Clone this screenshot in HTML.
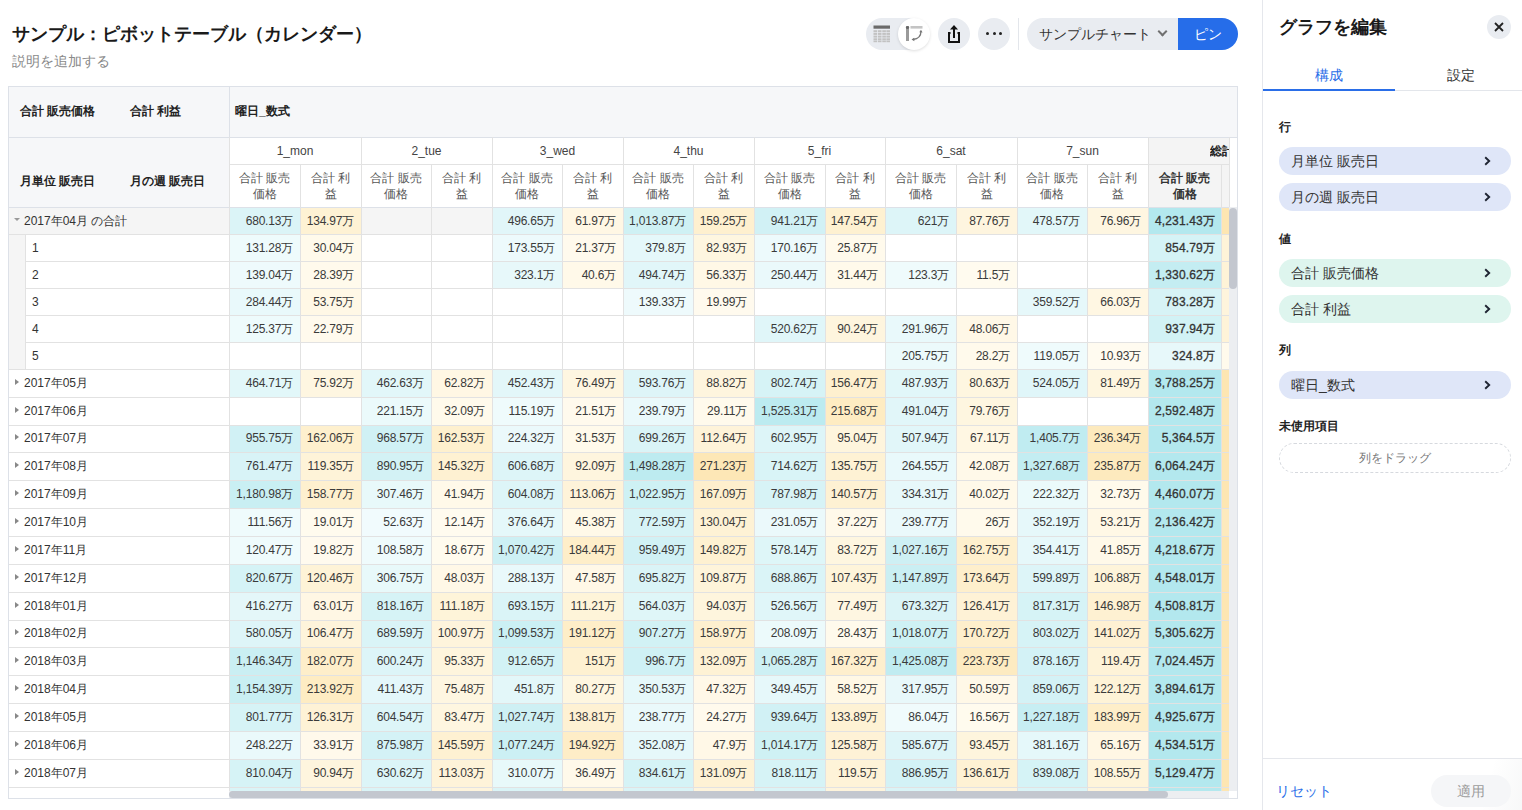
<!DOCTYPE html>
<html><head><meta charset="utf-8">
<style>
*{box-sizing:border-box;margin:0;padding:0}
html,body{width:1522px;height:810px;overflow:hidden;background:#fff;font-family:"Liberation Sans",sans-serif;color:#333}
#w div{position:absolute}
.c{font-size:12px;color:#3a3a3a;white-space:nowrap;letter-spacing:-0.2px}
.tb{font-weight:normal;color:#333;-webkit-text-stroke:0.3px #333;letter-spacing:0.15px}
.rl{font-size:12px;color:#333;white-space:nowrap}
.tri{position:absolute;left:15px;width:0;height:0}
.tri.right{border-top:3px solid transparent;border-bottom:3px solid transparent;border-left:4px solid #888}
.tri.down{border-left:3.5px solid transparent;border-right:3.5px solid transparent;border-top:3.5px solid #999;left:14px}
.hd{font-size:12px;font-weight:bold;color:#222;white-space:nowrap}
.dh{font-size:12px;color:#444;text-align:center;white-space:nowrap}
.mh{font-size:12px;color:#555;text-align:center;line-height:16px}
.pill{border-radius:14px;height:28px;font-size:14px;color:#333;line-height:28px;padding-left:12px}
.pill .chev{position:absolute;left:205px;top:8.6px;width:7px;height:10px;background:none}
.lbl{font-size:12px;font-weight:bold;color:#222}
</style></head><body>
<div id="w" style="position:relative;width:1522px;height:810px">
<!-- title -->
<div style="left:12px;top:22px;font-size:18px;font-weight:bold;color:#1a1a1a;white-space:nowrap;line-height:24px">サンプル：ピボットテーブル（カレンダー）</div>
<div style="left:12px;top:53px;font-size:13.5px;color:#8a8a8a;white-space:nowrap;line-height:18px">説明を追加する</div>
<!-- toolbar -->
<div style="left:866px;top:18px;width:63px;height:32px;border-radius:16px;background:#e9ecf1"></div>
<div style="left:898px;top:18px;width:32px;height:32px;border-radius:16px;background:#fff;box-shadow:0 1px 3px rgba(0,0,0,0.13)"></div>
<svg style="position:absolute;left:873px;top:25px" width="18" height="18" viewBox="0 0 18 18">
<rect x="0.5" y="0.5" width="16.5" height="3.2" fill="#6a6a6a"/>
<g fill="#c2c2c2">
<rect x="0.5" y="5.2" width="3.6" height="2"/><rect x="4.9" y="5.2" width="3.6" height="2"/><rect x="9.3" y="5.2" width="3.6" height="2"/><rect x="13.4" y="5.2" width="3.6" height="2"/>
<rect x="0.5" y="7.9" width="3.6" height="2"/><rect x="4.9" y="7.9" width="3.6" height="2"/><rect x="9.3" y="7.9" width="3.6" height="2"/><rect x="13.4" y="7.9" width="3.6" height="2"/>
<rect x="0.5" y="10.6" width="3.6" height="2"/><rect x="4.9" y="10.6" width="3.6" height="2"/><rect x="9.3" y="10.6" width="3.6" height="2"/><rect x="13.4" y="10.6" width="3.6" height="2"/>
<rect x="0.5" y="13.3" width="3.6" height="2"/><rect x="4.9" y="13.3" width="3.6" height="2"/><rect x="9.3" y="13.3" width="3.6" height="2"/><rect x="13.4" y="13.3" width="3.6" height="2"/>
<rect x="0.5" y="15.6" width="3.6" height="1.6"/><rect x="4.9" y="15.6" width="3.6" height="1.6"/><rect x="9.3" y="15.6" width="3.6" height="1.6"/><rect x="13.4" y="15.6" width="3.6" height="1.6"/>
</g></svg>
<svg style="position:absolute;left:905px;top:25px" width="18" height="18" viewBox="0 0 18 18">
<rect x="1" y="1" width="3" height="15" fill="#9a9a9a"/><circle cx="2.5" cy="2.5" r="1.6" fill="#666"/>
<rect x="5.5" y="1" width="12" height="2.6" fill="#c4c4c4"/>
<path d="M16 6 C16 11 13 14 8 14.5" stroke="#777" stroke-width="1.3" fill="none"/>
<path d="M14.3 7.2 L16 4.8 L17.5 7.4 Z" fill="#777"/><path d="M9.2 12.8 L6.5 14.6 L9.4 16.2 Z" fill="#777"/>
</svg>
<div style="left:938px;top:18px;width:32px;height:32px;border-radius:16px;background:#e9ecf1"></div>
<svg style="position:absolute;left:945px;top:23px" width="18" height="22" viewBox="0 0 18 22">
<path d="M5.5 10 H4 V19 H14 V10 H12.5" stroke="#111" stroke-width="2" fill="none"/>
<path d="M9 15 V3.5" stroke="#111" stroke-width="2"/>
<path d="M5 6.5 L9 2 L13 6.5 Z" fill="#111"/>
</svg>
<div style="left:978px;top:18px;width:32px;height:32px;border-radius:16px;background:#e9ecf1"></div>
<div style="left:986px;top:32px;width:3px;height:3px;border-radius:2px;background:#222"></div>
<div style="left:992.5px;top:32px;width:3px;height:3px;border-radius:2px;background:#222"></div>
<div style="left:999px;top:32px;width:3px;height:3px;border-radius:2px;background:#222"></div>
<div style="left:1018px;top:18px;width:1px;height:32px;background:#e3e6eb"></div>
<div style="left:1027px;top:18px;width:170px;height:32px;border-radius:16px 0 0 16px;background:#e9ecf1"></div>
<div style="left:1039px;top:18px;line-height:32px;font-size:14px;color:#333;white-space:nowrap">サンプルチャート</div>
<div style="left:1158.5px;top:28px;width:7px;height:7px;border-right:2px solid #707070;border-bottom:2px solid #707070;transform:rotate(45deg)"></div>
<div style="left:1178px;top:18px;width:60px;height:32px;border-radius:0 16px 16px 0;background:#266de9"></div>
<div style="left:1178px;top:18px;width:60px;line-height:32px;font-size:14px;color:#fff;text-align:center">ピン</div>

<!-- table frame -->
<div style="left:8px;top:86px;width:1230px;height:713px;border:1px solid #dde1e8;background:#fff"></div>
<div style="left:9px;top:87px;width:1228px;height:50px;background:#f6f7f9"></div>
<div style="left:9px;top:137px;width:220px;height:70px;background:#f6f7f9"></div>
<div style="left:1148px;top:137px;width:81px;height:70px;background:#f4f4f4"></div>
<div style="left:1229px;top:137px;width:8px;height:70px;background:#fff"></div>
<div style="left:9px;top:137px;width:1228px;height:1px;background:#dde1e8"></div>
<div style="left:229px;top:87px;width:1px;height:120px;background:#dde1e8"></div>
<div style="left:9px;top:207px;width:1220px;height:1px;background:#dde1e8"></div>
<div class="hd" style="left:20px;top:103px;line-height:17px">合計 販売価格</div>
<div class="hd" style="left:130px;top:103px;line-height:17px">合計 利益</div>
<div class="hd" style="left:235px;top:103px;line-height:17px">曜日_数式</div>
<div class="hd" style="left:20px;top:173px;line-height:17px">月単位 販売日</div>
<div class="hd" style="left:130px;top:173px;line-height:17px">月の週 販売日</div>
<div class="dh" style="left:229px;top:138px;width:132px;line-height:27px">1_mon</div>
<div class="mh" style="left:229px;top:169.5px;width:71px">合計 販売<br>価格</div>
<div class="mh" style="left:300px;top:169.5px;width:61px">合計 利<br>益</div>
<div style="left:229px;top:137px;width:1px;height:70px;background:#e2e2e2"></div>
<div style="left:300px;top:164px;width:1px;height:43px;background:#e2e2e2"></div>
<div class="dh" style="left:361px;top:138px;width:131px;line-height:27px">2_tue</div>
<div class="mh" style="left:361px;top:169.5px;width:70px">合計 販売<br>価格</div>
<div class="mh" style="left:431px;top:169.5px;width:61px">合計 利<br>益</div>
<div style="left:361px;top:137px;width:1px;height:70px;background:#e2e2e2"></div>
<div style="left:431px;top:164px;width:1px;height:43px;background:#e2e2e2"></div>
<div class="dh" style="left:492px;top:138px;width:131px;line-height:27px">3_wed</div>
<div class="mh" style="left:492px;top:169.5px;width:70px">合計 販売<br>価格</div>
<div class="mh" style="left:562px;top:169.5px;width:61px">合計 利<br>益</div>
<div style="left:492px;top:137px;width:1px;height:70px;background:#e2e2e2"></div>
<div style="left:562px;top:164px;width:1px;height:43px;background:#e2e2e2"></div>
<div class="dh" style="left:623px;top:138px;width:131px;line-height:27px">4_thu</div>
<div class="mh" style="left:623px;top:169.5px;width:70px">合計 販売<br>価格</div>
<div class="mh" style="left:693px;top:169.5px;width:61px">合計 利<br>益</div>
<div style="left:623px;top:137px;width:1px;height:70px;background:#e2e2e2"></div>
<div style="left:693px;top:164px;width:1px;height:43px;background:#e2e2e2"></div>
<div class="dh" style="left:754px;top:138px;width:131px;line-height:27px">5_fri</div>
<div class="mh" style="left:754px;top:169.5px;width:71px">合計 販売<br>価格</div>
<div class="mh" style="left:825px;top:169.5px;width:60px">合計 利<br>益</div>
<div style="left:754px;top:137px;width:1px;height:70px;background:#e2e2e2"></div>
<div style="left:825px;top:164px;width:1px;height:43px;background:#e2e2e2"></div>
<div class="dh" style="left:885px;top:138px;width:132px;line-height:27px">6_sat</div>
<div class="mh" style="left:885px;top:169.5px;width:71px">合計 販売<br>価格</div>
<div class="mh" style="left:956px;top:169.5px;width:61px">合計 利<br>益</div>
<div style="left:885px;top:137px;width:1px;height:70px;background:#e2e2e2"></div>
<div style="left:956px;top:164px;width:1px;height:43px;background:#e2e2e2"></div>
<div class="dh" style="left:1017px;top:138px;width:131px;line-height:27px">7_sun</div>
<div class="mh" style="left:1017px;top:169.5px;width:70px">合計 販売<br>価格</div>
<div class="mh" style="left:1087px;top:169.5px;width:61px">合計 利<br>益</div>
<div style="left:1017px;top:137px;width:1px;height:70px;background:#e2e2e2"></div>
<div style="left:1087px;top:164px;width:1px;height:43px;background:#e2e2e2"></div>
<div style="left:229px;top:164px;width:1000px;height:1px;background:#e2e2e2"></div>
<div style="left:1148px;top:137px;width:1px;height:70px;background:#e2e2e2"></div>
<div style="left:1229px;top:137px;width:1px;height:70px;background:#e2e2e2"></div>
<div class="hd" style="left:1210px;top:138px;width:19px;line-height:27px;overflow:hidden;white-space:nowrap">総計</div>
<div class="mh" style="left:1148px;top:169.5px;width:73px;font-weight:bold;color:#333">合計 販売<br>価格</div>
<div style="left:9px;top:207px;width:220px;height:27px;background:#f5f5f5;"></div>
<div style="left:229px;top:207px;width:71px;height:27px;background:#dbf4f7;"></div>
<div style="left:300px;top:207px;width:61px;height:27px;background:#fef2d4;"></div>
<div class="c" style="left:229px;top:208px;width:71px;height:27px;line-height:27px;text-align:right;padding-right:7px">680.13万</div>
<div class="c" style="left:300px;top:208px;width:61px;height:27px;line-height:27px;text-align:right;padding-right:7px">134.97万</div>
<div style="left:361px;top:207px;width:131px;height:27px;background:#f5f5f5;"></div>
<div style="left:492px;top:207px;width:70px;height:27px;background:#e1f6f9;"></div>
<div style="left:562px;top:207px;width:61px;height:27px;background:#fff7e4;"></div>
<div class="c" style="left:492px;top:208px;width:70px;height:27px;line-height:27px;text-align:right;padding-right:7px">496.65万</div>
<div class="c" style="left:562px;top:208px;width:61px;height:27px;line-height:27px;text-align:right;padding-right:7px">61.97万</div>
<div style="left:623px;top:207px;width:70px;height:27px;background:#cff1f4;"></div>
<div style="left:693px;top:207px;width:61px;height:27px;background:#fef0cf;"></div>
<div class="c" style="left:623px;top:208px;width:70px;height:27px;line-height:27px;text-align:right;padding-right:7px">1,013.87万</div>
<div class="c" style="left:693px;top:208px;width:61px;height:27px;line-height:27px;text-align:right;padding-right:7px">159.25万</div>
<div style="left:754px;top:207px;width:71px;height:27px;background:#d1f1f5;"></div>
<div style="left:825px;top:207px;width:60px;height:27px;background:#fef1d1;"></div>
<div class="c" style="left:754px;top:208px;width:71px;height:27px;line-height:27px;text-align:right;padding-right:7px">941.21万</div>
<div class="c" style="left:825px;top:208px;width:60px;height:27px;line-height:27px;text-align:right;padding-right:7px">147.54万</div>
<div style="left:885px;top:207px;width:71px;height:27px;background:#ddf5f8;"></div>
<div style="left:956px;top:207px;width:61px;height:27px;background:#fef5df;"></div>
<div class="c" style="left:885px;top:208px;width:71px;height:27px;line-height:27px;text-align:right;padding-right:7px">621万</div>
<div class="c" style="left:956px;top:208px;width:61px;height:27px;line-height:27px;text-align:right;padding-right:7px">87.76万</div>
<div style="left:1017px;top:207px;width:70px;height:27px;background:#e2f7f9;"></div>
<div style="left:1087px;top:207px;width:61px;height:27px;background:#fef6e1;"></div>
<div class="c" style="left:1017px;top:208px;width:70px;height:27px;line-height:27px;text-align:right;padding-right:7px">478.57万</div>
<div class="c" style="left:1087px;top:208px;width:61px;height:27px;line-height:27px;text-align:right;padding-right:7px">76.96万</div>
<div style="left:1148px;top:207px;width:73px;height:27px;background:#b3e8ee;"></div>
<div style="left:1221px;top:207px;width:8px;height:27px;background:#fde6b2;"></div>
<div class="c tb" style="left:1148px;top:208px;width:73px;height:27px;line-height:27px;text-align:right;padding-right:6px">4,231.43万</div>
<div class="rl" style="left:24px;top:208px;height:27px;line-height:27px">2017年04月 の合計</div>
<span style="top:218px" class="tri down"></span>
<div style="left:9px;top:234px;width:16px;height:27px;background:#f5f5f5;"></div>
<div style="left:25px;top:234px;width:204px;height:27px;background:#fff;"></div>
<div style="left:229px;top:234px;width:71px;height:27px;background:#eefbfc;"></div>
<div style="left:300px;top:234px;width:61px;height:27px;background:#fffaeb;"></div>
<div class="c" style="left:229px;top:235px;width:71px;height:27px;line-height:27px;text-align:right;padding-right:7px">131.28万</div>
<div class="c" style="left:300px;top:235px;width:61px;height:27px;line-height:27px;text-align:right;padding-right:7px">30.04万</div>
<div style="left:492px;top:234px;width:70px;height:27px;background:#edfafc;"></div>
<div style="left:562px;top:234px;width:61px;height:27px;background:#fffaed;"></div>
<div class="c" style="left:492px;top:235px;width:70px;height:27px;line-height:27px;text-align:right;padding-right:7px">173.55万</div>
<div class="c" style="left:562px;top:235px;width:61px;height:27px;line-height:27px;text-align:right;padding-right:7px">21.37万</div>
<div style="left:623px;top:234px;width:70px;height:27px;background:#e5f8fa;"></div>
<div style="left:693px;top:234px;width:61px;height:27px;background:#fef6e0;"></div>
<div class="c" style="left:623px;top:235px;width:70px;height:27px;line-height:27px;text-align:right;padding-right:7px">379.8万</div>
<div class="c" style="left:693px;top:235px;width:61px;height:27px;line-height:27px;text-align:right;padding-right:7px">82.93万</div>
<div style="left:754px;top:234px;width:71px;height:27px;background:#edfafc;"></div>
<div style="left:825px;top:234px;width:60px;height:27px;background:#fffaec;"></div>
<div class="c" style="left:754px;top:235px;width:71px;height:27px;line-height:27px;text-align:right;padding-right:7px">170.16万</div>
<div class="c" style="left:825px;top:235px;width:60px;height:27px;line-height:27px;text-align:right;padding-right:7px">25.87万</div>
<div style="left:1148px;top:234px;width:73px;height:27px;background:#d5f3f6;"></div>
<div style="left:1221px;top:234px;width:8px;height:27px;background:#fef3d8;"></div>
<div class="c tb" style="left:1148px;top:235px;width:73px;height:27px;line-height:27px;text-align:right;padding-right:6px">854.79万</div>
<div class="rl" style="left:32px;top:235px;height:27px;line-height:27px">1</div>
<div style="left:9px;top:261px;width:16px;height:27px;background:#f5f5f5;"></div>
<div style="left:25px;top:261px;width:204px;height:27px;background:#fff;"></div>
<div style="left:229px;top:261px;width:71px;height:27px;background:#eefafc;"></div>
<div style="left:300px;top:261px;width:61px;height:27px;background:#fffaec;"></div>
<div class="c" style="left:229px;top:262px;width:71px;height:27px;line-height:27px;text-align:right;padding-right:7px">139.04万</div>
<div class="c" style="left:300px;top:262px;width:61px;height:27px;line-height:27px;text-align:right;padding-right:7px">28.39万</div>
<div style="left:492px;top:261px;width:70px;height:27px;background:#e7f8fa;"></div>
<div style="left:562px;top:261px;width:61px;height:27px;background:#fff9e9;"></div>
<div class="c" style="left:492px;top:262px;width:70px;height:27px;line-height:27px;text-align:right;padding-right:7px">323.1万</div>
<div class="c" style="left:562px;top:262px;width:61px;height:27px;line-height:27px;text-align:right;padding-right:7px">40.6万</div>
<div style="left:623px;top:261px;width:70px;height:27px;background:#e1f6f9;"></div>
<div style="left:693px;top:261px;width:61px;height:27px;background:#fff8e6;"></div>
<div class="c" style="left:623px;top:262px;width:70px;height:27px;line-height:27px;text-align:right;padding-right:7px">494.74万</div>
<div class="c" style="left:693px;top:262px;width:61px;height:27px;line-height:27px;text-align:right;padding-right:7px">56.33万</div>
<div style="left:754px;top:261px;width:71px;height:27px;background:#eaf9fb;"></div>
<div style="left:825px;top:261px;width:60px;height:27px;background:#fffaeb;"></div>
<div class="c" style="left:754px;top:262px;width:71px;height:27px;line-height:27px;text-align:right;padding-right:7px">250.44万</div>
<div class="c" style="left:825px;top:262px;width:60px;height:27px;line-height:27px;text-align:right;padding-right:7px">31.44万</div>
<div style="left:885px;top:261px;width:71px;height:27px;background:#effbfc;"></div>
<div style="left:956px;top:261px;width:61px;height:27px;background:#fffbef;"></div>
<div class="c" style="left:885px;top:262px;width:71px;height:27px;line-height:27px;text-align:right;padding-right:7px">123.3万</div>
<div class="c" style="left:956px;top:262px;width:61px;height:27px;line-height:27px;text-align:right;padding-right:7px">11.5万</div>
<div style="left:1148px;top:261px;width:73px;height:27px;background:#c4edf2;"></div>
<div style="left:1221px;top:261px;width:8px;height:27px;background:#fef3d7;"></div>
<div class="c tb" style="left:1148px;top:262px;width:73px;height:27px;line-height:27px;text-align:right;padding-right:6px">1,330.62万</div>
<div class="rl" style="left:32px;top:262px;height:27px;line-height:27px">2</div>
<div style="left:9px;top:288px;width:16px;height:27px;background:#f5f5f5;"></div>
<div style="left:25px;top:288px;width:204px;height:27px;background:#fff;"></div>
<div style="left:229px;top:288px;width:71px;height:27px;background:#e9f9fb;"></div>
<div style="left:300px;top:288px;width:61px;height:27px;background:#fff8e6;"></div>
<div class="c" style="left:229px;top:289px;width:71px;height:27px;line-height:27px;text-align:right;padding-right:7px">284.44万</div>
<div class="c" style="left:300px;top:289px;width:61px;height:27px;line-height:27px;text-align:right;padding-right:7px">53.75万</div>
<div style="left:623px;top:288px;width:70px;height:27px;background:#eefafc;"></div>
<div style="left:693px;top:288px;width:61px;height:27px;background:#fffaee;"></div>
<div class="c" style="left:623px;top:289px;width:70px;height:27px;line-height:27px;text-align:right;padding-right:7px">139.33万</div>
<div class="c" style="left:693px;top:289px;width:61px;height:27px;line-height:27px;text-align:right;padding-right:7px">19.99万</div>
<div style="left:1017px;top:288px;width:70px;height:27px;background:#e6f8fa;"></div>
<div style="left:1087px;top:288px;width:61px;height:27px;background:#fff7e3;"></div>
<div class="c" style="left:1017px;top:289px;width:70px;height:27px;line-height:27px;text-align:right;padding-right:7px">359.52万</div>
<div class="c" style="left:1087px;top:289px;width:61px;height:27px;line-height:27px;text-align:right;padding-right:7px">66.03万</div>
<div style="left:1148px;top:288px;width:73px;height:27px;background:#d7f3f6;"></div>
<div style="left:1221px;top:288px;width:8px;height:27px;background:#fef4dc;"></div>
<div class="c tb" style="left:1148px;top:289px;width:73px;height:27px;line-height:27px;text-align:right;padding-right:6px">783.28万</div>
<div class="rl" style="left:32px;top:289px;height:27px;line-height:27px">3</div>
<div style="left:9px;top:315px;width:16px;height:27px;background:#f5f5f5;"></div>
<div style="left:25px;top:315px;width:204px;height:27px;background:#fff;"></div>
<div style="left:229px;top:315px;width:71px;height:27px;background:#eefbfc;"></div>
<div style="left:300px;top:315px;width:61px;height:27px;background:#fffaed;"></div>
<div class="c" style="left:229px;top:316px;width:71px;height:27px;line-height:27px;text-align:right;padding-right:7px">125.37万</div>
<div class="c" style="left:300px;top:316px;width:61px;height:27px;line-height:27px;text-align:right;padding-right:7px">22.79万</div>
<div style="left:754px;top:315px;width:71px;height:27px;background:#e0f6f9;"></div>
<div style="left:825px;top:315px;width:60px;height:27px;background:#fef5de;"></div>
<div class="c" style="left:754px;top:316px;width:71px;height:27px;line-height:27px;text-align:right;padding-right:7px">520.62万</div>
<div class="c" style="left:825px;top:316px;width:60px;height:27px;line-height:27px;text-align:right;padding-right:7px">90.24万</div>
<div style="left:885px;top:315px;width:71px;height:27px;background:#e9f9fb;"></div>
<div style="left:956px;top:315px;width:61px;height:27px;background:#fff8e7;"></div>
<div class="c" style="left:885px;top:316px;width:71px;height:27px;line-height:27px;text-align:right;padding-right:7px">291.96万</div>
<div class="c" style="left:956px;top:316px;width:61px;height:27px;line-height:27px;text-align:right;padding-right:7px">48.06万</div>
<div style="left:1148px;top:315px;width:73px;height:27px;background:#d2f2f5;"></div>
<div style="left:1221px;top:315px;width:8px;height:27px;background:#fef3d8;"></div>
<div class="c tb" style="left:1148px;top:316px;width:73px;height:27px;line-height:27px;text-align:right;padding-right:6px">937.94万</div>
<div class="rl" style="left:32px;top:316px;height:27px;line-height:27px">4</div>
<div style="left:9px;top:342px;width:16px;height:27px;background:#f5f5f5;"></div>
<div style="left:25px;top:342px;width:204px;height:27px;background:#fff;"></div>
<div style="left:885px;top:342px;width:71px;height:27px;background:#ecfafb;"></div>
<div style="left:956px;top:342px;width:61px;height:27px;background:#fffaec;"></div>
<div class="c" style="left:885px;top:343px;width:71px;height:27px;line-height:27px;text-align:right;padding-right:7px">205.75万</div>
<div class="c" style="left:956px;top:343px;width:61px;height:27px;line-height:27px;text-align:right;padding-right:7px">28.2万</div>
<div style="left:1017px;top:342px;width:70px;height:27px;background:#effbfc;"></div>
<div style="left:1087px;top:342px;width:61px;height:27px;background:#fffbf0;"></div>
<div class="c" style="left:1017px;top:343px;width:70px;height:27px;line-height:27px;text-align:right;padding-right:7px">119.05万</div>
<div class="c" style="left:1087px;top:343px;width:61px;height:27px;line-height:27px;text-align:right;padding-right:7px">10.93万</div>
<div style="left:1148px;top:342px;width:73px;height:27px;background:#e7f8fa;"></div>
<div style="left:1221px;top:342px;width:8px;height:27px;background:#fffaec;"></div>
<div class="c tb" style="left:1148px;top:343px;width:73px;height:27px;line-height:27px;text-align:right;padding-right:6px">324.8万</div>
<div class="rl" style="left:32px;top:343px;height:27px;line-height:27px">5</div>
<div style="left:229px;top:369px;width:71px;height:28px;background:#e2f7f9;"></div>
<div style="left:300px;top:369px;width:61px;height:28px;background:#fef6e1;"></div>
<div class="c" style="left:229px;top:369px;width:71px;height:28px;line-height:28px;text-align:right;padding-right:7px">464.71万</div>
<div class="c" style="left:300px;top:369px;width:61px;height:28px;line-height:28px;text-align:right;padding-right:7px">75.92万</div>
<div style="left:361px;top:369px;width:70px;height:28px;background:#e2f7f9;"></div>
<div style="left:431px;top:369px;width:61px;height:28px;background:#fff7e4;"></div>
<div class="c" style="left:361px;top:369px;width:70px;height:28px;line-height:28px;text-align:right;padding-right:7px">462.63万</div>
<div class="c" style="left:431px;top:369px;width:61px;height:28px;line-height:28px;text-align:right;padding-right:7px">62.82万</div>
<div style="left:492px;top:369px;width:70px;height:28px;background:#e3f7f9;"></div>
<div style="left:562px;top:369px;width:61px;height:28px;background:#fef6e1;"></div>
<div class="c" style="left:492px;top:369px;width:70px;height:28px;line-height:28px;text-align:right;padding-right:7px">452.43万</div>
<div class="c" style="left:562px;top:369px;width:61px;height:28px;line-height:28px;text-align:right;padding-right:7px">76.49万</div>
<div style="left:623px;top:369px;width:70px;height:28px;background:#def5f8;"></div>
<div style="left:693px;top:369px;width:61px;height:28px;background:#fef5de;"></div>
<div class="c" style="left:623px;top:369px;width:70px;height:28px;line-height:28px;text-align:right;padding-right:7px">593.76万</div>
<div class="c" style="left:693px;top:369px;width:61px;height:28px;line-height:28px;text-align:right;padding-right:7px">88.82万</div>
<div style="left:754px;top:369px;width:71px;height:28px;background:#d6f3f6;"></div>
<div style="left:825px;top:369px;width:60px;height:28px;background:#fef0cf;"></div>
<div class="c" style="left:754px;top:369px;width:71px;height:28px;line-height:28px;text-align:right;padding-right:7px">802.74万</div>
<div class="c" style="left:825px;top:369px;width:60px;height:28px;line-height:28px;text-align:right;padding-right:7px">156.47万</div>
<div style="left:885px;top:369px;width:71px;height:28px;background:#e1f7f9;"></div>
<div style="left:956px;top:369px;width:61px;height:28px;background:#fef6e0;"></div>
<div class="c" style="left:885px;top:369px;width:71px;height:28px;line-height:28px;text-align:right;padding-right:7px">487.93万</div>
<div class="c" style="left:956px;top:369px;width:61px;height:28px;line-height:28px;text-align:right;padding-right:7px">80.63万</div>
<div style="left:1017px;top:369px;width:70px;height:28px;background:#e0f6f9;"></div>
<div style="left:1087px;top:369px;width:61px;height:28px;background:#fef6e0;"></div>
<div class="c" style="left:1017px;top:369px;width:70px;height:28px;line-height:28px;text-align:right;padding-right:7px">524.05万</div>
<div class="c" style="left:1087px;top:369px;width:61px;height:28px;line-height:28px;text-align:right;padding-right:7px">81.49万</div>
<div style="left:1148px;top:369px;width:73px;height:28px;background:#b3e8ee;"></div>
<div style="left:1221px;top:369px;width:8px;height:28px;background:#fde6b2;"></div>
<div class="c tb" style="left:1148px;top:369px;width:73px;height:28px;line-height:28px;text-align:right;padding-right:6px">3,788.25万</div>
<div class="rl" style="left:24px;top:369px;height:28px;line-height:28px">2017年05月</div>
<span style="top:379px" class="tri right"></span>
<div style="left:361px;top:397px;width:70px;height:28px;background:#ebfafb;"></div>
<div style="left:431px;top:397px;width:61px;height:28px;background:#fffaeb;"></div>
<div class="c" style="left:361px;top:397px;width:70px;height:28px;line-height:28px;text-align:right;padding-right:7px">221.15万</div>
<div class="c" style="left:431px;top:397px;width:61px;height:28px;line-height:28px;text-align:right;padding-right:7px">32.09万</div>
<div style="left:492px;top:397px;width:70px;height:28px;background:#effbfc;"></div>
<div style="left:562px;top:397px;width:61px;height:28px;background:#fffaed;"></div>
<div class="c" style="left:492px;top:397px;width:70px;height:28px;line-height:28px;text-align:right;padding-right:7px">115.19万</div>
<div class="c" style="left:562px;top:397px;width:61px;height:28px;line-height:28px;text-align:right;padding-right:7px">21.51万</div>
<div style="left:623px;top:397px;width:70px;height:28px;background:#eaf9fb;"></div>
<div style="left:693px;top:397px;width:61px;height:28px;background:#fffaec;"></div>
<div class="c" style="left:623px;top:397px;width:70px;height:28px;line-height:28px;text-align:right;padding-right:7px">239.79万</div>
<div class="c" style="left:693px;top:397px;width:61px;height:28px;line-height:28px;text-align:right;padding-right:7px">29.11万</div>
<div style="left:754px;top:397px;width:71px;height:28px;background:#bcebf0;"></div>
<div style="left:825px;top:397px;width:60px;height:28px;background:#feecc2;"></div>
<div class="c" style="left:754px;top:397px;width:71px;height:28px;line-height:28px;text-align:right;padding-right:7px">1,525.31万</div>
<div class="c" style="left:825px;top:397px;width:60px;height:28px;line-height:28px;text-align:right;padding-right:7px">215.68万</div>
<div style="left:885px;top:397px;width:71px;height:28px;background:#e1f6f9;"></div>
<div style="left:956px;top:397px;width:61px;height:28px;background:#fef6e0;"></div>
<div class="c" style="left:885px;top:397px;width:71px;height:28px;line-height:28px;text-align:right;padding-right:7px">491.04万</div>
<div class="c" style="left:956px;top:397px;width:61px;height:28px;line-height:28px;text-align:right;padding-right:7px">79.76万</div>
<div style="left:1148px;top:397px;width:73px;height:28px;background:#b3e8ee;"></div>
<div style="left:1221px;top:397px;width:8px;height:28px;background:#fde7b5;"></div>
<div class="c tb" style="left:1148px;top:397px;width:73px;height:28px;line-height:28px;text-align:right;padding-right:6px">2,592.48万</div>
<div class="rl" style="left:24px;top:397px;height:28px;line-height:28px">2017年06月</div>
<span style="top:407px" class="tri right"></span>
<div style="left:229px;top:425px;width:71px;height:27px;background:#d1f1f5;"></div>
<div style="left:300px;top:425px;width:61px;height:27px;background:#fef0ce;"></div>
<div class="c" style="left:229px;top:425px;width:71px;height:27px;line-height:27px;text-align:right;padding-right:7px">955.75万</div>
<div class="c" style="left:300px;top:425px;width:61px;height:27px;line-height:27px;text-align:right;padding-right:7px">162.06万</div>
<div style="left:361px;top:425px;width:70px;height:27px;background:#d0f1f5;"></div>
<div style="left:431px;top:425px;width:61px;height:27px;background:#fef0ce;"></div>
<div class="c" style="left:361px;top:425px;width:70px;height:27px;line-height:27px;text-align:right;padding-right:7px">968.57万</div>
<div class="c" style="left:431px;top:425px;width:61px;height:27px;line-height:27px;text-align:right;padding-right:7px">162.53万</div>
<div style="left:492px;top:425px;width:70px;height:27px;background:#ebf9fb;"></div>
<div style="left:562px;top:425px;width:61px;height:27px;background:#fffaeb;"></div>
<div class="c" style="left:492px;top:425px;width:70px;height:27px;line-height:27px;text-align:right;padding-right:7px">224.32万</div>
<div class="c" style="left:562px;top:425px;width:61px;height:27px;line-height:27px;text-align:right;padding-right:7px">31.53万</div>
<div style="left:623px;top:425px;width:70px;height:27px;background:#daf4f7;"></div>
<div style="left:693px;top:425px;width:61px;height:27px;background:#fef3d9;"></div>
<div class="c" style="left:623px;top:425px;width:70px;height:27px;line-height:27px;text-align:right;padding-right:7px">699.26万</div>
<div class="c" style="left:693px;top:425px;width:61px;height:27px;line-height:27px;text-align:right;padding-right:7px">112.64万</div>
<div style="left:754px;top:425px;width:71px;height:27px;background:#ddf5f8;"></div>
<div style="left:825px;top:425px;width:60px;height:27px;background:#fef5dd;"></div>
<div class="c" style="left:754px;top:425px;width:71px;height:27px;line-height:27px;text-align:right;padding-right:7px">602.95万</div>
<div class="c" style="left:825px;top:425px;width:60px;height:27px;line-height:27px;text-align:right;padding-right:7px">95.04万</div>
<div style="left:885px;top:425px;width:71px;height:27px;background:#e1f6f9;"></div>
<div style="left:956px;top:425px;width:61px;height:27px;background:#fff7e3;"></div>
<div class="c" style="left:885px;top:425px;width:71px;height:27px;line-height:27px;text-align:right;padding-right:7px">507.94万</div>
<div class="c" style="left:956px;top:425px;width:61px;height:27px;line-height:27px;text-align:right;padding-right:7px">67.11万</div>
<div style="left:1017px;top:425px;width:70px;height:27px;background:#c0ecf1;"></div>
<div style="left:1087px;top:425px;width:61px;height:27px;background:#fdeabe;"></div>
<div class="c" style="left:1017px;top:425px;width:70px;height:27px;line-height:27px;text-align:right;padding-right:7px">1,405.7万</div>
<div class="c" style="left:1087px;top:425px;width:61px;height:27px;line-height:27px;text-align:right;padding-right:7px">236.34万</div>
<div style="left:1148px;top:425px;width:73px;height:27px;background:#b3e8ee;"></div>
<div style="left:1221px;top:425px;width:8px;height:27px;background:#fde6b2;"></div>
<div class="c tb" style="left:1148px;top:425px;width:73px;height:27px;line-height:27px;text-align:right;padding-right:6px">5,364.5万</div>
<div class="rl" style="left:24px;top:425px;height:27px;line-height:27px">2017年07月</div>
<span style="top:434px" class="tri right"></span>
<div style="left:229px;top:452px;width:71px;height:28px;background:#d8f3f7;"></div>
<div style="left:300px;top:452px;width:61px;height:28px;background:#fef3d8;"></div>
<div class="c" style="left:229px;top:452px;width:71px;height:28px;line-height:28px;text-align:right;padding-right:7px">761.47万</div>
<div class="c" style="left:300px;top:452px;width:61px;height:28px;line-height:28px;text-align:right;padding-right:7px">119.35万</div>
<div style="left:361px;top:452px;width:70px;height:28px;background:#d3f2f5;"></div>
<div style="left:431px;top:452px;width:61px;height:28px;background:#fef1d2;"></div>
<div class="c" style="left:361px;top:452px;width:70px;height:28px;line-height:28px;text-align:right;padding-right:7px">890.95万</div>
<div class="c" style="left:431px;top:452px;width:61px;height:28px;line-height:28px;text-align:right;padding-right:7px">145.32万</div>
<div style="left:492px;top:452px;width:70px;height:28px;background:#ddf5f8;"></div>
<div style="left:562px;top:452px;width:61px;height:28px;background:#fef5de;"></div>
<div class="c" style="left:492px;top:452px;width:70px;height:28px;line-height:28px;text-align:right;padding-right:7px">606.68万</div>
<div class="c" style="left:562px;top:452px;width:61px;height:28px;line-height:28px;text-align:right;padding-right:7px">92.09万</div>
<div style="left:623px;top:452px;width:70px;height:28px;background:#bdebf0;"></div>
<div style="left:693px;top:452px;width:61px;height:28px;background:#fde7b6;"></div>
<div class="c" style="left:623px;top:452px;width:70px;height:28px;line-height:28px;text-align:right;padding-right:7px">1,498.28万</div>
<div class="c" style="left:693px;top:452px;width:61px;height:28px;line-height:28px;text-align:right;padding-right:7px">271.23万</div>
<div style="left:754px;top:452px;width:71px;height:28px;background:#d9f4f7;"></div>
<div style="left:825px;top:452px;width:60px;height:28px;background:#fef2d4;"></div>
<div class="c" style="left:754px;top:452px;width:71px;height:28px;line-height:28px;text-align:right;padding-right:7px">714.62万</div>
<div class="c" style="left:825px;top:452px;width:60px;height:28px;line-height:28px;text-align:right;padding-right:7px">135.75万</div>
<div style="left:885px;top:452px;width:71px;height:28px;background:#e9f9fb;"></div>
<div style="left:956px;top:452px;width:61px;height:28px;background:#fff9e9;"></div>
<div class="c" style="left:885px;top:452px;width:71px;height:28px;line-height:28px;text-align:right;padding-right:7px">264.55万</div>
<div class="c" style="left:956px;top:452px;width:61px;height:28px;line-height:28px;text-align:right;padding-right:7px">42.08万</div>
<div style="left:1017px;top:452px;width:70px;height:28px;background:#c3edf2;"></div>
<div style="left:1087px;top:452px;width:61px;height:28px;background:#fdeabe;"></div>
<div class="c" style="left:1017px;top:452px;width:70px;height:28px;line-height:28px;text-align:right;padding-right:7px">1,327.68万</div>
<div class="c" style="left:1087px;top:452px;width:61px;height:28px;line-height:28px;text-align:right;padding-right:7px">235.87万</div>
<div style="left:1148px;top:452px;width:73px;height:28px;background:#b3e8ee;"></div>
<div style="left:1221px;top:452px;width:8px;height:28px;background:#fde6b2;"></div>
<div class="c tb" style="left:1148px;top:452px;width:73px;height:28px;line-height:28px;text-align:right;padding-right:6px">6,064.24万</div>
<div class="rl" style="left:24px;top:452px;height:28px;line-height:28px">2017年08月</div>
<span style="top:462px" class="tri right"></span>
<div style="left:229px;top:480px;width:71px;height:28px;background:#c9eff3;"></div>
<div style="left:300px;top:480px;width:61px;height:28px;background:#fef0cf;"></div>
<div class="c" style="left:229px;top:480px;width:71px;height:28px;line-height:28px;text-align:right;padding-right:7px">1,180.98万</div>
<div class="c" style="left:300px;top:480px;width:61px;height:28px;line-height:28px;text-align:right;padding-right:7px">158.77万</div>
<div style="left:361px;top:480px;width:70px;height:28px;background:#e8f9fa;"></div>
<div style="left:431px;top:480px;width:61px;height:28px;background:#fff9e9;"></div>
<div class="c" style="left:361px;top:480px;width:70px;height:28px;line-height:28px;text-align:right;padding-right:7px">307.46万</div>
<div class="c" style="left:431px;top:480px;width:61px;height:28px;line-height:28px;text-align:right;padding-right:7px">41.94万</div>
<div style="left:492px;top:480px;width:70px;height:28px;background:#ddf5f8;"></div>
<div style="left:562px;top:480px;width:61px;height:28px;background:#fef3d9;"></div>
<div class="c" style="left:492px;top:480px;width:70px;height:28px;line-height:28px;text-align:right;padding-right:7px">604.08万</div>
<div class="c" style="left:562px;top:480px;width:61px;height:28px;line-height:28px;text-align:right;padding-right:7px">113.06万</div>
<div style="left:623px;top:480px;width:70px;height:28px;background:#cef1f4;"></div>
<div style="left:693px;top:480px;width:61px;height:28px;background:#feefcd;"></div>
<div class="c" style="left:623px;top:480px;width:70px;height:28px;line-height:28px;text-align:right;padding-right:7px">1,022.95万</div>
<div class="c" style="left:693px;top:480px;width:61px;height:28px;line-height:28px;text-align:right;padding-right:7px">167.09万</div>
<div style="left:754px;top:480px;width:71px;height:28px;background:#d7f3f6;"></div>
<div style="left:825px;top:480px;width:60px;height:28px;background:#fef1d3;"></div>
<div class="c" style="left:754px;top:480px;width:71px;height:28px;line-height:28px;text-align:right;padding-right:7px">787.98万</div>
<div class="c" style="left:825px;top:480px;width:60px;height:28px;line-height:28px;text-align:right;padding-right:7px">140.57万</div>
<div style="left:885px;top:480px;width:71px;height:28px;background:#e7f8fa;"></div>
<div style="left:956px;top:480px;width:61px;height:28px;background:#fff9e9;"></div>
<div class="c" style="left:885px;top:480px;width:71px;height:28px;line-height:28px;text-align:right;padding-right:7px">334.31万</div>
<div class="c" style="left:956px;top:480px;width:61px;height:28px;line-height:28px;text-align:right;padding-right:7px">40.02万</div>
<div style="left:1017px;top:480px;width:70px;height:28px;background:#ebfafb;"></div>
<div style="left:1087px;top:480px;width:61px;height:28px;background:#fffaeb;"></div>
<div class="c" style="left:1017px;top:480px;width:70px;height:28px;line-height:28px;text-align:right;padding-right:7px">222.32万</div>
<div class="c" style="left:1087px;top:480px;width:61px;height:28px;line-height:28px;text-align:right;padding-right:7px">32.73万</div>
<div style="left:1148px;top:480px;width:73px;height:28px;background:#b3e8ee;"></div>
<div style="left:1221px;top:480px;width:8px;height:28px;background:#fde6b2;"></div>
<div class="c tb" style="left:1148px;top:480px;width:73px;height:28px;line-height:28px;text-align:right;padding-right:6px">4,460.07万</div>
<div class="rl" style="left:24px;top:480px;height:28px;line-height:28px">2017年09月</div>
<span style="top:490px" class="tri right"></span>
<div style="left:229px;top:508px;width:71px;height:28px;background:#effbfc;"></div>
<div style="left:300px;top:508px;width:61px;height:28px;background:#fffbee;"></div>
<div class="c" style="left:229px;top:508px;width:71px;height:28px;line-height:28px;text-align:right;padding-right:7px">111.56万</div>
<div class="c" style="left:300px;top:508px;width:61px;height:28px;line-height:28px;text-align:right;padding-right:7px">19.01万</div>
<div style="left:361px;top:508px;width:70px;height:28px;background:#f1fbfd;"></div>
<div style="left:431px;top:508px;width:61px;height:28px;background:#fffbef;"></div>
<div class="c" style="left:361px;top:508px;width:70px;height:28px;line-height:28px;text-align:right;padding-right:7px">52.63万</div>
<div class="c" style="left:431px;top:508px;width:61px;height:28px;line-height:28px;text-align:right;padding-right:7px">12.14万</div>
<div style="left:492px;top:508px;width:70px;height:28px;background:#e5f8fa;"></div>
<div style="left:562px;top:508px;width:61px;height:28px;background:#fff9e8;"></div>
<div class="c" style="left:492px;top:508px;width:70px;height:28px;line-height:28px;text-align:right;padding-right:7px">376.64万</div>
<div class="c" style="left:562px;top:508px;width:61px;height:28px;line-height:28px;text-align:right;padding-right:7px">45.38万</div>
<div style="left:623px;top:508px;width:70px;height:28px;background:#d7f3f6;"></div>
<div style="left:693px;top:508px;width:61px;height:28px;background:#fef2d5;"></div>
<div class="c" style="left:623px;top:508px;width:70px;height:28px;line-height:28px;text-align:right;padding-right:7px">772.59万</div>
<div class="c" style="left:693px;top:508px;width:61px;height:28px;line-height:28px;text-align:right;padding-right:7px">130.04万</div>
<div style="left:754px;top:508px;width:71px;height:28px;background:#ebf9fb;"></div>
<div style="left:825px;top:508px;width:60px;height:28px;background:#fff9ea;"></div>
<div class="c" style="left:754px;top:508px;width:71px;height:28px;line-height:28px;text-align:right;padding-right:7px">231.05万</div>
<div class="c" style="left:825px;top:508px;width:60px;height:28px;line-height:28px;text-align:right;padding-right:7px">37.22万</div>
<div style="left:885px;top:508px;width:71px;height:28px;background:#eaf9fb;"></div>
<div style="left:956px;top:508px;width:61px;height:28px;background:#fffaec;"></div>
<div class="c" style="left:885px;top:508px;width:71px;height:28px;line-height:28px;text-align:right;padding-right:7px">239.77万</div>
<div class="c" style="left:956px;top:508px;width:61px;height:28px;line-height:28px;text-align:right;padding-right:7px">26万</div>
<div style="left:1017px;top:508px;width:70px;height:28px;background:#e6f8fa;"></div>
<div style="left:1087px;top:508px;width:61px;height:28px;background:#fff8e6;"></div>
<div class="c" style="left:1017px;top:508px;width:70px;height:28px;line-height:28px;text-align:right;padding-right:7px">352.19万</div>
<div class="c" style="left:1087px;top:508px;width:61px;height:28px;line-height:28px;text-align:right;padding-right:7px">53.21万</div>
<div style="left:1148px;top:508px;width:73px;height:28px;background:#b3e8ee;"></div>
<div style="left:1221px;top:508px;width:8px;height:28px;background:#fdeabe;"></div>
<div class="c tb" style="left:1148px;top:508px;width:73px;height:28px;line-height:28px;text-align:right;padding-right:6px">2,136.42万</div>
<div class="rl" style="left:24px;top:508px;height:28px;line-height:28px">2017年10月</div>
<span style="top:518px" class="tri right"></span>
<div style="left:229px;top:536px;width:71px;height:28px;background:#effbfc;"></div>
<div style="left:300px;top:536px;width:61px;height:28px;background:#fffaee;"></div>
<div class="c" style="left:229px;top:536px;width:71px;height:28px;line-height:28px;text-align:right;padding-right:7px">120.47万</div>
<div class="c" style="left:300px;top:536px;width:61px;height:28px;line-height:28px;text-align:right;padding-right:7px">19.82万</div>
<div style="left:361px;top:536px;width:70px;height:28px;background:#effbfc;"></div>
<div style="left:431px;top:536px;width:61px;height:28px;background:#fffbee;"></div>
<div class="c" style="left:361px;top:536px;width:70px;height:28px;line-height:28px;text-align:right;padding-right:7px">108.58万</div>
<div class="c" style="left:431px;top:536px;width:61px;height:28px;line-height:28px;text-align:right;padding-right:7px">18.67万</div>
<div style="left:492px;top:536px;width:70px;height:28px;background:#cdf0f4;"></div>
<div style="left:562px;top:536px;width:61px;height:28px;background:#feeec9;"></div>
<div class="c" style="left:492px;top:536px;width:70px;height:28px;line-height:28px;text-align:right;padding-right:7px">1,070.42万</div>
<div class="c" style="left:562px;top:536px;width:61px;height:28px;line-height:28px;text-align:right;padding-right:7px">184.44万</div>
<div style="left:623px;top:536px;width:70px;height:28px;background:#d1f1f5;"></div>
<div style="left:693px;top:536px;width:61px;height:28px;background:#fef1d1;"></div>
<div class="c" style="left:623px;top:536px;width:70px;height:28px;line-height:28px;text-align:right;padding-right:7px">959.49万</div>
<div class="c" style="left:693px;top:536px;width:61px;height:28px;line-height:28px;text-align:right;padding-right:7px">149.82万</div>
<div style="left:754px;top:536px;width:71px;height:28px;background:#def6f8;"></div>
<div style="left:825px;top:536px;width:60px;height:28px;background:#fef6e0;"></div>
<div class="c" style="left:754px;top:536px;width:71px;height:28px;line-height:28px;text-align:right;padding-right:7px">578.14万</div>
<div class="c" style="left:825px;top:536px;width:60px;height:28px;line-height:28px;text-align:right;padding-right:7px">83.72万</div>
<div style="left:885px;top:536px;width:71px;height:28px;background:#cef0f4;"></div>
<div style="left:956px;top:536px;width:61px;height:28px;background:#fef0ce;"></div>
<div class="c" style="left:885px;top:536px;width:71px;height:28px;line-height:28px;text-align:right;padding-right:7px">1,027.16万</div>
<div class="c" style="left:956px;top:536px;width:61px;height:28px;line-height:28px;text-align:right;padding-right:7px">162.75万</div>
<div style="left:1017px;top:536px;width:70px;height:28px;background:#e6f8fa;"></div>
<div style="left:1087px;top:536px;width:61px;height:28px;background:#fff9e9;"></div>
<div class="c" style="left:1017px;top:536px;width:70px;height:28px;line-height:28px;text-align:right;padding-right:7px">354.41万</div>
<div class="c" style="left:1087px;top:536px;width:61px;height:28px;line-height:28px;text-align:right;padding-right:7px">41.85万</div>
<div style="left:1148px;top:536px;width:73px;height:28px;background:#b3e8ee;"></div>
<div style="left:1221px;top:536px;width:8px;height:28px;background:#fde6b2;"></div>
<div class="c tb" style="left:1148px;top:536px;width:73px;height:28px;line-height:28px;text-align:right;padding-right:6px">4,218.67万</div>
<div class="rl" style="left:24px;top:536px;height:28px;line-height:28px">2017年11月</div>
<span style="top:546px" class="tri right"></span>
<div style="left:229px;top:564px;width:71px;height:28px;background:#d5f3f6;"></div>
<div style="left:300px;top:564px;width:61px;height:28px;background:#fef3d7;"></div>
<div class="c" style="left:229px;top:564px;width:71px;height:28px;line-height:28px;text-align:right;padding-right:7px">820.67万</div>
<div class="c" style="left:300px;top:564px;width:61px;height:28px;line-height:28px;text-align:right;padding-right:7px">120.46万</div>
<div style="left:361px;top:564px;width:70px;height:28px;background:#e8f9fa;"></div>
<div style="left:431px;top:564px;width:61px;height:28px;background:#fff8e7;"></div>
<div class="c" style="left:361px;top:564px;width:70px;height:28px;line-height:28px;text-align:right;padding-right:7px">306.75万</div>
<div class="c" style="left:431px;top:564px;width:61px;height:28px;line-height:28px;text-align:right;padding-right:7px">48.03万</div>
<div style="left:492px;top:564px;width:70px;height:28px;background:#e9f9fb;"></div>
<div style="left:562px;top:564px;width:61px;height:28px;background:#fff8e7;"></div>
<div class="c" style="left:492px;top:564px;width:70px;height:28px;line-height:28px;text-align:right;padding-right:7px">288.13万</div>
<div class="c" style="left:562px;top:564px;width:61px;height:28px;line-height:28px;text-align:right;padding-right:7px">47.58万</div>
<div style="left:623px;top:564px;width:70px;height:28px;background:#daf4f7;"></div>
<div style="left:693px;top:564px;width:61px;height:28px;background:#fef4da;"></div>
<div class="c" style="left:623px;top:564px;width:70px;height:28px;line-height:28px;text-align:right;padding-right:7px">695.82万</div>
<div class="c" style="left:693px;top:564px;width:61px;height:28px;line-height:28px;text-align:right;padding-right:7px">109.87万</div>
<div style="left:754px;top:564px;width:71px;height:28px;background:#daf4f7;"></div>
<div style="left:825px;top:564px;width:60px;height:28px;background:#fef4da;"></div>
<div class="c" style="left:754px;top:564px;width:71px;height:28px;line-height:28px;text-align:right;padding-right:7px">688.86万</div>
<div class="c" style="left:825px;top:564px;width:60px;height:28px;line-height:28px;text-align:right;padding-right:7px">107.43万</div>
<div style="left:885px;top:564px;width:71px;height:28px;background:#caeff3;"></div>
<div style="left:956px;top:564px;width:61px;height:28px;background:#feefcc;"></div>
<div class="c" style="left:885px;top:564px;width:71px;height:28px;line-height:28px;text-align:right;padding-right:7px">1,147.89万</div>
<div class="c" style="left:956px;top:564px;width:61px;height:28px;line-height:28px;text-align:right;padding-right:7px">173.64万</div>
<div style="left:1017px;top:564px;width:70px;height:28px;background:#ddf5f8;"></div>
<div style="left:1087px;top:564px;width:61px;height:28px;background:#fef4da;"></div>
<div class="c" style="left:1017px;top:564px;width:70px;height:28px;line-height:28px;text-align:right;padding-right:7px">599.89万</div>
<div class="c" style="left:1087px;top:564px;width:61px;height:28px;line-height:28px;text-align:right;padding-right:7px">106.88万</div>
<div style="left:1148px;top:564px;width:73px;height:28px;background:#b3e8ee;"></div>
<div style="left:1221px;top:564px;width:8px;height:28px;background:#fde6b2;"></div>
<div class="c tb" style="left:1148px;top:564px;width:73px;height:28px;line-height:28px;text-align:right;padding-right:6px">4,548.01万</div>
<div class="rl" style="left:24px;top:564px;height:28px;line-height:28px">2017年12月</div>
<span style="top:574px" class="tri right"></span>
<div style="left:229px;top:592px;width:71px;height:28px;background:#e4f7f9;"></div>
<div style="left:300px;top:592px;width:61px;height:28px;background:#fff7e4;"></div>
<div class="c" style="left:229px;top:592px;width:71px;height:28px;line-height:28px;text-align:right;padding-right:7px">416.27万</div>
<div class="c" style="left:300px;top:592px;width:61px;height:28px;line-height:28px;text-align:right;padding-right:7px">63.01万</div>
<div style="left:361px;top:592px;width:70px;height:28px;background:#d6f3f6;"></div>
<div style="left:431px;top:592px;width:61px;height:28px;background:#fef4d9;"></div>
<div class="c" style="left:361px;top:592px;width:70px;height:28px;line-height:28px;text-align:right;padding-right:7px">818.16万</div>
<div class="c" style="left:431px;top:592px;width:61px;height:28px;line-height:28px;text-align:right;padding-right:7px">111.18万</div>
<div style="left:492px;top:592px;width:70px;height:28px;background:#daf4f7;"></div>
<div style="left:562px;top:592px;width:61px;height:28px;background:#fef4d9;"></div>
<div class="c" style="left:492px;top:592px;width:70px;height:28px;line-height:28px;text-align:right;padding-right:7px">693.15万</div>
<div class="c" style="left:562px;top:592px;width:61px;height:28px;line-height:28px;text-align:right;padding-right:7px">111.21万</div>
<div style="left:623px;top:592px;width:70px;height:28px;background:#dff6f8;"></div>
<div style="left:693px;top:592px;width:61px;height:28px;background:#fef5dd;"></div>
<div class="c" style="left:623px;top:592px;width:70px;height:28px;line-height:28px;text-align:right;padding-right:7px">564.03万</div>
<div class="c" style="left:693px;top:592px;width:61px;height:28px;line-height:28px;text-align:right;padding-right:7px">94.03万</div>
<div style="left:754px;top:592px;width:71px;height:28px;background:#e0f6f9;"></div>
<div style="left:825px;top:592px;width:60px;height:28px;background:#fef6e1;"></div>
<div class="c" style="left:754px;top:592px;width:71px;height:28px;line-height:28px;text-align:right;padding-right:7px">526.56万</div>
<div class="c" style="left:825px;top:592px;width:60px;height:28px;line-height:28px;text-align:right;padding-right:7px">77.49万</div>
<div style="left:885px;top:592px;width:71px;height:28px;background:#dbf4f7;"></div>
<div style="left:956px;top:592px;width:61px;height:28px;background:#fef2d6;"></div>
<div class="c" style="left:885px;top:592px;width:71px;height:28px;line-height:28px;text-align:right;padding-right:7px">673.32万</div>
<div class="c" style="left:956px;top:592px;width:61px;height:28px;line-height:28px;text-align:right;padding-right:7px">126.41万</div>
<div style="left:1017px;top:592px;width:70px;height:28px;background:#d6f3f6;"></div>
<div style="left:1087px;top:592px;width:61px;height:28px;background:#fef1d2;"></div>
<div class="c" style="left:1017px;top:592px;width:70px;height:28px;line-height:28px;text-align:right;padding-right:7px">817.31万</div>
<div class="c" style="left:1087px;top:592px;width:61px;height:28px;line-height:28px;text-align:right;padding-right:7px">146.98万</div>
<div style="left:1148px;top:592px;width:73px;height:28px;background:#b3e8ee;"></div>
<div style="left:1221px;top:592px;width:8px;height:28px;background:#fde6b2;"></div>
<div class="c tb" style="left:1148px;top:592px;width:73px;height:28px;line-height:28px;text-align:right;padding-right:6px">4,508.81万</div>
<div class="rl" style="left:24px;top:592px;height:28px;line-height:28px">2018年01月</div>
<span style="top:602px" class="tri right"></span>
<div style="left:229px;top:620px;width:71px;height:27px;background:#def5f8;"></div>
<div style="left:300px;top:620px;width:61px;height:27px;background:#fef4db;"></div>
<div class="c" style="left:229px;top:620px;width:71px;height:27px;line-height:27px;text-align:right;padding-right:7px">580.05万</div>
<div class="c" style="left:300px;top:620px;width:61px;height:27px;line-height:27px;text-align:right;padding-right:7px">106.47万</div>
<div style="left:361px;top:620px;width:70px;height:27px;background:#daf4f7;"></div>
<div style="left:431px;top:620px;width:61px;height:27px;background:#fef4dc;"></div>
<div class="c" style="left:361px;top:620px;width:70px;height:27px;line-height:27px;text-align:right;padding-right:7px">689.59万</div>
<div class="c" style="left:431px;top:620px;width:61px;height:27px;line-height:27px;text-align:right;padding-right:7px">100.97万</div>
<div style="left:492px;top:620px;width:70px;height:27px;background:#cbf0f4;"></div>
<div style="left:562px;top:620px;width:61px;height:27px;background:#feeec8;"></div>
<div class="c" style="left:492px;top:620px;width:70px;height:27px;line-height:27px;text-align:right;padding-right:7px">1,099.53万</div>
<div class="c" style="left:562px;top:620px;width:61px;height:27px;line-height:27px;text-align:right;padding-right:7px">191.12万</div>
<div style="left:623px;top:620px;width:70px;height:27px;background:#d2f2f5;"></div>
<div style="left:693px;top:620px;width:61px;height:27px;background:#fef0cf;"></div>
<div class="c" style="left:623px;top:620px;width:70px;height:27px;line-height:27px;text-align:right;padding-right:7px">907.27万</div>
<div class="c" style="left:693px;top:620px;width:61px;height:27px;line-height:27px;text-align:right;padding-right:7px">158.97万</div>
<div style="left:754px;top:620px;width:71px;height:27px;background:#ecfafb;"></div>
<div style="left:825px;top:620px;width:60px;height:27px;background:#fffaec;"></div>
<div class="c" style="left:754px;top:620px;width:71px;height:27px;line-height:27px;text-align:right;padding-right:7px">208.09万</div>
<div class="c" style="left:825px;top:620px;width:60px;height:27px;line-height:27px;text-align:right;padding-right:7px">28.43万</div>
<div style="left:885px;top:620px;width:71px;height:27px;background:#cef1f4;"></div>
<div style="left:956px;top:620px;width:61px;height:27px;background:#feefcc;"></div>
<div class="c" style="left:885px;top:620px;width:71px;height:27px;line-height:27px;text-align:right;padding-right:7px">1,018.07万</div>
<div class="c" style="left:956px;top:620px;width:61px;height:27px;line-height:27px;text-align:right;padding-right:7px">170.72万</div>
<div style="left:1017px;top:620px;width:70px;height:27px;background:#d6f3f6;"></div>
<div style="left:1087px;top:620px;width:61px;height:27px;background:#fef1d3;"></div>
<div class="c" style="left:1017px;top:620px;width:70px;height:27px;line-height:27px;text-align:right;padding-right:7px">803.02万</div>
<div class="c" style="left:1087px;top:620px;width:61px;height:27px;line-height:27px;text-align:right;padding-right:7px">141.02万</div>
<div style="left:1148px;top:620px;width:73px;height:27px;background:#b3e8ee;"></div>
<div style="left:1221px;top:620px;width:8px;height:27px;background:#fde6b2;"></div>
<div class="c tb" style="left:1148px;top:620px;width:73px;height:27px;line-height:27px;text-align:right;padding-right:6px">5,305.62万</div>
<div class="rl" style="left:24px;top:620px;height:27px;line-height:27px">2018年02月</div>
<span style="top:629px" class="tri right"></span>
<div style="left:229px;top:647px;width:71px;height:28px;background:#caeff3;"></div>
<div style="left:300px;top:647px;width:61px;height:28px;background:#feeeca;"></div>
<div class="c" style="left:229px;top:647px;width:71px;height:28px;line-height:28px;text-align:right;padding-right:7px">1,146.34万</div>
<div class="c" style="left:300px;top:647px;width:61px;height:28px;line-height:28px;text-align:right;padding-right:7px">182.07万</div>
<div style="left:361px;top:647px;width:70px;height:28px;background:#ddf5f8;"></div>
<div style="left:431px;top:647px;width:61px;height:28px;background:#fef5dd;"></div>
<div class="c" style="left:361px;top:647px;width:70px;height:28px;line-height:28px;text-align:right;padding-right:7px">600.24万</div>
<div class="c" style="left:431px;top:647px;width:61px;height:28px;line-height:28px;text-align:right;padding-right:7px">95.33万</div>
<div style="left:492px;top:647px;width:70px;height:28px;background:#d2f2f5;"></div>
<div style="left:562px;top:647px;width:61px;height:28px;background:#fef1d1;"></div>
<div class="c" style="left:492px;top:647px;width:70px;height:28px;line-height:28px;text-align:right;padding-right:7px">912.65万</div>
<div class="c" style="left:562px;top:647px;width:61px;height:28px;line-height:28px;text-align:right;padding-right:7px">151万</div>
<div style="left:623px;top:647px;width:70px;height:28px;background:#cff1f5;"></div>
<div style="left:693px;top:647px;width:61px;height:28px;background:#fef2d5;"></div>
<div class="c" style="left:623px;top:647px;width:70px;height:28px;line-height:28px;text-align:right;padding-right:7px">996.7万</div>
<div class="c" style="left:693px;top:647px;width:61px;height:28px;line-height:28px;text-align:right;padding-right:7px">132.09万</div>
<div style="left:754px;top:647px;width:71px;height:28px;background:#cdf0f4;"></div>
<div style="left:825px;top:647px;width:60px;height:28px;background:#feefcd;"></div>
<div class="c" style="left:754px;top:647px;width:71px;height:28px;line-height:28px;text-align:right;padding-right:7px">1,065.28万</div>
<div class="c" style="left:825px;top:647px;width:60px;height:28px;line-height:28px;text-align:right;padding-right:7px">167.32万</div>
<div style="left:885px;top:647px;width:71px;height:28px;background:#c0ecf1;"></div>
<div style="left:956px;top:647px;width:61px;height:28px;background:#fdebc1;"></div>
<div class="c" style="left:885px;top:647px;width:71px;height:28px;line-height:28px;text-align:right;padding-right:7px">1,425.08万</div>
<div class="c" style="left:956px;top:647px;width:61px;height:28px;line-height:28px;text-align:right;padding-right:7px">223.73万</div>
<div style="left:1017px;top:647px;width:70px;height:28px;background:#d3f2f6;"></div>
<div style="left:1087px;top:647px;width:61px;height:28px;background:#fef3d8;"></div>
<div class="c" style="left:1017px;top:647px;width:70px;height:28px;line-height:28px;text-align:right;padding-right:7px">878.16万</div>
<div class="c" style="left:1087px;top:647px;width:61px;height:28px;line-height:28px;text-align:right;padding-right:7px">119.4万</div>
<div style="left:1148px;top:647px;width:73px;height:28px;background:#b3e8ee;"></div>
<div style="left:1221px;top:647px;width:8px;height:28px;background:#fde6b2;"></div>
<div class="c tb" style="left:1148px;top:647px;width:73px;height:28px;line-height:28px;text-align:right;padding-right:6px">7,024.45万</div>
<div class="rl" style="left:24px;top:647px;height:28px;line-height:28px">2018年03月</div>
<span style="top:657px" class="tri right"></span>
<div style="left:229px;top:675px;width:71px;height:28px;background:#c9eff3;"></div>
<div style="left:300px;top:675px;width:61px;height:28px;background:#feecc3;"></div>
<div class="c" style="left:229px;top:675px;width:71px;height:28px;line-height:28px;text-align:right;padding-right:7px">1,154.39万</div>
<div class="c" style="left:300px;top:675px;width:61px;height:28px;line-height:28px;text-align:right;padding-right:7px">213.92万</div>
<div style="left:361px;top:675px;width:70px;height:28px;background:#e4f7fa;"></div>
<div style="left:431px;top:675px;width:61px;height:28px;background:#fef6e1;"></div>
<div class="c" style="left:361px;top:675px;width:70px;height:28px;line-height:28px;text-align:right;padding-right:7px">411.43万</div>
<div class="c" style="left:431px;top:675px;width:61px;height:28px;line-height:28px;text-align:right;padding-right:7px">75.48万</div>
<div style="left:492px;top:675px;width:70px;height:28px;background:#e3f7f9;"></div>
<div style="left:562px;top:675px;width:61px;height:28px;background:#fef6e0;"></div>
<div class="c" style="left:492px;top:675px;width:70px;height:28px;line-height:28px;text-align:right;padding-right:7px">451.8万</div>
<div class="c" style="left:562px;top:675px;width:61px;height:28px;line-height:28px;text-align:right;padding-right:7px">80.27万</div>
<div style="left:623px;top:675px;width:70px;height:28px;background:#e6f8fa;"></div>
<div style="left:693px;top:675px;width:61px;height:28px;background:#fff8e8;"></div>
<div class="c" style="left:623px;top:675px;width:70px;height:28px;line-height:28px;text-align:right;padding-right:7px">350.53万</div>
<div class="c" style="left:693px;top:675px;width:61px;height:28px;line-height:28px;text-align:right;padding-right:7px">47.32万</div>
<div style="left:754px;top:675px;width:71px;height:28px;background:#e6f8fa;"></div>
<div style="left:825px;top:675px;width:60px;height:28px;background:#fff8e5;"></div>
<div class="c" style="left:754px;top:675px;width:71px;height:28px;line-height:28px;text-align:right;padding-right:7px">349.45万</div>
<div class="c" style="left:825px;top:675px;width:60px;height:28px;line-height:28px;text-align:right;padding-right:7px">58.52万</div>
<div style="left:885px;top:675px;width:71px;height:28px;background:#e8f8fa;"></div>
<div style="left:956px;top:675px;width:61px;height:28px;background:#fff8e7;"></div>
<div class="c" style="left:885px;top:675px;width:71px;height:28px;line-height:28px;text-align:right;padding-right:7px">317.95万</div>
<div class="c" style="left:956px;top:675px;width:61px;height:28px;line-height:28px;text-align:right;padding-right:7px">50.59万</div>
<div style="left:1017px;top:675px;width:70px;height:28px;background:#d4f2f6;"></div>
<div style="left:1087px;top:675px;width:61px;height:28px;background:#fef3d7;"></div>
<div class="c" style="left:1017px;top:675px;width:70px;height:28px;line-height:28px;text-align:right;padding-right:7px">859.06万</div>
<div class="c" style="left:1087px;top:675px;width:61px;height:28px;line-height:28px;text-align:right;padding-right:7px">122.12万</div>
<div style="left:1148px;top:675px;width:73px;height:28px;background:#b3e8ee;"></div>
<div style="left:1221px;top:675px;width:8px;height:28px;background:#fde6b2;"></div>
<div class="c tb" style="left:1148px;top:675px;width:73px;height:28px;line-height:28px;text-align:right;padding-right:6px">3,894.61万</div>
<div class="rl" style="left:24px;top:675px;height:28px;line-height:28px">2018年04月</div>
<span style="top:685px" class="tri right"></span>
<div style="left:229px;top:703px;width:71px;height:28px;background:#d6f3f6;"></div>
<div style="left:300px;top:703px;width:61px;height:28px;background:#fef2d6;"></div>
<div class="c" style="left:229px;top:703px;width:71px;height:28px;line-height:28px;text-align:right;padding-right:7px">801.77万</div>
<div class="c" style="left:300px;top:703px;width:61px;height:28px;line-height:28px;text-align:right;padding-right:7px">126.31万</div>
<div style="left:361px;top:703px;width:70px;height:28px;background:#ddf5f8;"></div>
<div style="left:431px;top:703px;width:61px;height:28px;background:#fef6e0;"></div>
<div class="c" style="left:361px;top:703px;width:70px;height:28px;line-height:28px;text-align:right;padding-right:7px">604.54万</div>
<div class="c" style="left:431px;top:703px;width:61px;height:28px;line-height:28px;text-align:right;padding-right:7px">83.47万</div>
<div style="left:492px;top:703px;width:70px;height:28px;background:#cef0f4;"></div>
<div style="left:562px;top:703px;width:61px;height:28px;background:#fef1d3;"></div>
<div class="c" style="left:492px;top:703px;width:70px;height:28px;line-height:28px;text-align:right;padding-right:7px">1,027.74万</div>
<div class="c" style="left:562px;top:703px;width:61px;height:28px;line-height:28px;text-align:right;padding-right:7px">138.81万</div>
<div style="left:623px;top:703px;width:70px;height:28px;background:#eaf9fb;"></div>
<div style="left:693px;top:703px;width:61px;height:28px;background:#fffaed;"></div>
<div class="c" style="left:623px;top:703px;width:70px;height:28px;line-height:28px;text-align:right;padding-right:7px">238.77万</div>
<div class="c" style="left:693px;top:703px;width:61px;height:28px;line-height:28px;text-align:right;padding-right:7px">24.27万</div>
<div style="left:754px;top:703px;width:71px;height:28px;background:#d1f1f5;"></div>
<div style="left:825px;top:703px;width:60px;height:28px;background:#fef2d4;"></div>
<div class="c" style="left:754px;top:703px;width:71px;height:28px;line-height:28px;text-align:right;padding-right:7px">939.64万</div>
<div class="c" style="left:825px;top:703px;width:60px;height:28px;line-height:28px;text-align:right;padding-right:7px">133.89万</div>
<div style="left:885px;top:703px;width:71px;height:28px;background:#f0fbfc;"></div>
<div style="left:956px;top:703px;width:61px;height:28px;background:#fffbee;"></div>
<div class="c" style="left:885px;top:703px;width:71px;height:28px;line-height:28px;text-align:right;padding-right:7px">86.04万</div>
<div class="c" style="left:956px;top:703px;width:61px;height:28px;line-height:28px;text-align:right;padding-right:7px">16.56万</div>
<div style="left:1017px;top:703px;width:70px;height:28px;background:#c7eef3;"></div>
<div style="left:1087px;top:703px;width:61px;height:28px;background:#feeec9;"></div>
<div class="c" style="left:1017px;top:703px;width:70px;height:28px;line-height:28px;text-align:right;padding-right:7px">1,227.18万</div>
<div class="c" style="left:1087px;top:703px;width:61px;height:28px;line-height:28px;text-align:right;padding-right:7px">183.99万</div>
<div style="left:1148px;top:703px;width:73px;height:28px;background:#b3e8ee;"></div>
<div style="left:1221px;top:703px;width:8px;height:28px;background:#fde6b2;"></div>
<div class="c tb" style="left:1148px;top:703px;width:73px;height:28px;line-height:28px;text-align:right;padding-right:6px">4,925.67万</div>
<div class="rl" style="left:24px;top:703px;height:28px;line-height:28px">2018年05月</div>
<span style="top:713px" class="tri right"></span>
<div style="left:229px;top:731px;width:71px;height:28px;background:#eaf9fb;"></div>
<div style="left:300px;top:731px;width:61px;height:28px;background:#fff9eb;"></div>
<div class="c" style="left:229px;top:731px;width:71px;height:28px;line-height:28px;text-align:right;padding-right:7px">248.22万</div>
<div class="c" style="left:300px;top:731px;width:61px;height:28px;line-height:28px;text-align:right;padding-right:7px">33.91万</div>
<div style="left:361px;top:731px;width:70px;height:28px;background:#d4f2f6;"></div>
<div style="left:431px;top:731px;width:61px;height:28px;background:#fef1d2;"></div>
<div class="c" style="left:361px;top:731px;width:70px;height:28px;line-height:28px;text-align:right;padding-right:7px">875.98万</div>
<div class="c" style="left:431px;top:731px;width:61px;height:28px;line-height:28px;text-align:right;padding-right:7px">145.59万</div>
<div style="left:492px;top:731px;width:70px;height:28px;background:#ccf0f4;"></div>
<div style="left:562px;top:731px;width:61px;height:28px;background:#feedc7;"></div>
<div class="c" style="left:492px;top:731px;width:70px;height:28px;line-height:28px;text-align:right;padding-right:7px">1,077.24万</div>
<div class="c" style="left:562px;top:731px;width:61px;height:28px;line-height:28px;text-align:right;padding-right:7px">194.92万</div>
<div style="left:623px;top:731px;width:70px;height:28px;background:#e6f8fa;"></div>
<div style="left:693px;top:731px;width:61px;height:28px;background:#fff8e7;"></div>
<div class="c" style="left:623px;top:731px;width:70px;height:28px;line-height:28px;text-align:right;padding-right:7px">352.08万</div>
<div class="c" style="left:693px;top:731px;width:61px;height:28px;line-height:28px;text-align:right;padding-right:7px">47.9万</div>
<div style="left:754px;top:731px;width:71px;height:28px;background:#cff1f4;"></div>
<div style="left:825px;top:731px;width:60px;height:28px;background:#fef2d6;"></div>
<div class="c" style="left:754px;top:731px;width:71px;height:28px;line-height:28px;text-align:right;padding-right:7px">1,014.17万</div>
<div class="c" style="left:825px;top:731px;width:60px;height:28px;line-height:28px;text-align:right;padding-right:7px">125.58万</div>
<div style="left:885px;top:731px;width:71px;height:28px;background:#def5f8;"></div>
<div style="left:956px;top:731px;width:61px;height:28px;background:#fef5dd;"></div>
<div class="c" style="left:885px;top:731px;width:71px;height:28px;line-height:28px;text-align:right;padding-right:7px">585.67万</div>
<div class="c" style="left:956px;top:731px;width:61px;height:28px;line-height:28px;text-align:right;padding-right:7px">93.45万</div>
<div style="left:1017px;top:731px;width:70px;height:28px;background:#e5f8fa;"></div>
<div style="left:1087px;top:731px;width:61px;height:28px;background:#fff7e4;"></div>
<div class="c" style="left:1017px;top:731px;width:70px;height:28px;line-height:28px;text-align:right;padding-right:7px">381.16万</div>
<div class="c" style="left:1087px;top:731px;width:61px;height:28px;line-height:28px;text-align:right;padding-right:7px">65.16万</div>
<div style="left:1148px;top:731px;width:73px;height:28px;background:#b3e8ee;"></div>
<div style="left:1221px;top:731px;width:8px;height:28px;background:#fde6b2;"></div>
<div class="c tb" style="left:1148px;top:731px;width:73px;height:28px;line-height:28px;text-align:right;padding-right:6px">4,534.51万</div>
<div class="rl" style="left:24px;top:731px;height:28px;line-height:28px">2018年06月</div>
<span style="top:741px" class="tri right"></span>
<div style="left:229px;top:759px;width:71px;height:28px;background:#d6f3f6;"></div>
<div style="left:300px;top:759px;width:61px;height:28px;background:#fef5de;"></div>
<div class="c" style="left:229px;top:759px;width:71px;height:28px;line-height:28px;text-align:right;padding-right:7px">810.04万</div>
<div class="c" style="left:300px;top:759px;width:61px;height:28px;line-height:28px;text-align:right;padding-right:7px">90.94万</div>
<div style="left:361px;top:759px;width:70px;height:28px;background:#dcf5f8;"></div>
<div style="left:431px;top:759px;width:61px;height:28px;background:#fef3d9;"></div>
<div class="c" style="left:361px;top:759px;width:70px;height:28px;line-height:28px;text-align:right;padding-right:7px">630.62万</div>
<div class="c" style="left:431px;top:759px;width:61px;height:28px;line-height:28px;text-align:right;padding-right:7px">113.03万</div>
<div style="left:492px;top:759px;width:70px;height:28px;background:#e8f9fa;"></div>
<div style="left:562px;top:759px;width:61px;height:28px;background:#fff9ea;"></div>
<div class="c" style="left:492px;top:759px;width:70px;height:28px;line-height:28px;text-align:right;padding-right:7px">310.07万</div>
<div class="c" style="left:562px;top:759px;width:61px;height:28px;line-height:28px;text-align:right;padding-right:7px">36.49万</div>
<div style="left:623px;top:759px;width:70px;height:28px;background:#d5f3f6;"></div>
<div style="left:693px;top:759px;width:61px;height:28px;background:#fef2d5;"></div>
<div class="c" style="left:623px;top:759px;width:70px;height:28px;line-height:28px;text-align:right;padding-right:7px">834.61万</div>
<div class="c" style="left:693px;top:759px;width:61px;height:28px;line-height:28px;text-align:right;padding-right:7px">131.09万</div>
<div style="left:754px;top:759px;width:71px;height:28px;background:#d6f3f6;"></div>
<div style="left:825px;top:759px;width:60px;height:28px;background:#fef3d8;"></div>
<div class="c" style="left:754px;top:759px;width:71px;height:28px;line-height:28px;text-align:right;padding-right:7px">818.11万</div>
<div class="c" style="left:825px;top:759px;width:60px;height:28px;line-height:28px;text-align:right;padding-right:7px">119.5万</div>
<div style="left:885px;top:759px;width:71px;height:28px;background:#d3f2f6;"></div>
<div style="left:956px;top:759px;width:61px;height:28px;background:#fef2d4;"></div>
<div class="c" style="left:885px;top:759px;width:71px;height:28px;line-height:28px;text-align:right;padding-right:7px">886.95万</div>
<div class="c" style="left:956px;top:759px;width:61px;height:28px;line-height:28px;text-align:right;padding-right:7px">136.61万</div>
<div style="left:1017px;top:759px;width:70px;height:28px;background:#d5f3f6;"></div>
<div style="left:1087px;top:759px;width:61px;height:28px;background:#fef4da;"></div>
<div class="c" style="left:1017px;top:759px;width:70px;height:28px;line-height:28px;text-align:right;padding-right:7px">839.08万</div>
<div class="c" style="left:1087px;top:759px;width:61px;height:28px;line-height:28px;text-align:right;padding-right:7px">108.55万</div>
<div style="left:1148px;top:759px;width:73px;height:28px;background:#b3e8ee;"></div>
<div style="left:1221px;top:759px;width:8px;height:28px;background:#fde6b2;"></div>
<div class="c tb" style="left:1148px;top:759px;width:73px;height:28px;line-height:28px;text-align:right;padding-right:6px">5,129.47万</div>
<div class="rl" style="left:24px;top:759px;height:28px;line-height:28px">2018年07月</div>
<span style="top:769px" class="tri right"></span>
<div style="left:229px;top:787px;width:71px;height:4px;background:#daf4f7;"></div>
<div style="left:300px;top:787px;width:61px;height:4px;background:#fef4dc;"></div>
<div style="left:361px;top:787px;width:70px;height:4px;background:#daf4f7;"></div>
<div style="left:431px;top:787px;width:61px;height:4px;background:#fef4dc;"></div>
<div style="left:492px;top:787px;width:70px;height:4px;background:#daf4f7;"></div>
<div style="left:562px;top:787px;width:61px;height:4px;background:#fef4dc;"></div>
<div style="left:623px;top:787px;width:70px;height:4px;background:#daf4f7;"></div>
<div style="left:693px;top:787px;width:61px;height:4px;background:#fef4dc;"></div>
<div style="left:754px;top:787px;width:71px;height:4px;background:#daf4f7;"></div>
<div style="left:825px;top:787px;width:60px;height:4px;background:#fef4dc;"></div>
<div style="left:885px;top:787px;width:71px;height:4px;background:#daf4f7;"></div>
<div style="left:956px;top:787px;width:61px;height:4px;background:#fef4dc;"></div>
<div style="left:1017px;top:787px;width:70px;height:4px;background:#daf4f7;"></div>
<div style="left:1087px;top:787px;width:61px;height:4px;background:#fef4dc;"></div>
<div style="left:1148px;top:787px;width:73px;height:4px;background:#b3e8ee;"></div>
<div style="left:1221px;top:787px;width:8px;height:4px;background:#fde6b2;"></div>
<div style="left:9px;top:234px;width:220px;height:1px;background:#e2e2e2;"></div>
<div style="left:229px;top:234px;width:1000px;height:1px;background:#e2e2e2;"></div>
<div style="left:25px;top:261px;width:204px;height:1px;background:#e2e2e2;"></div>
<div style="left:229px;top:261px;width:1000px;height:1px;background:#e2e2e2;"></div>
<div style="left:25px;top:288px;width:204px;height:1px;background:#e2e2e2;"></div>
<div style="left:229px;top:288px;width:1000px;height:1px;background:#e2e2e2;"></div>
<div style="left:25px;top:315px;width:204px;height:1px;background:#e2e2e2;"></div>
<div style="left:229px;top:315px;width:1000px;height:1px;background:#e2e2e2;"></div>
<div style="left:25px;top:342px;width:204px;height:1px;background:#e2e2e2;"></div>
<div style="left:229px;top:342px;width:1000px;height:1px;background:#e2e2e2;"></div>
<div style="left:9px;top:369px;width:220px;height:1px;background:#e2e2e2;"></div>
<div style="left:229px;top:369px;width:1000px;height:1px;background:#e2e2e2;"></div>
<div style="left:9px;top:397px;width:220px;height:1px;background:#e2e2e2;"></div>
<div style="left:229px;top:397px;width:1000px;height:1px;background:#e2e2e2;"></div>
<div style="left:9px;top:425px;width:220px;height:1px;background:#e2e2e2;"></div>
<div style="left:229px;top:425px;width:1000px;height:1px;background:#e2e2e2;"></div>
<div style="left:9px;top:452px;width:220px;height:1px;background:#e2e2e2;"></div>
<div style="left:229px;top:452px;width:1000px;height:1px;background:#e2e2e2;"></div>
<div style="left:9px;top:480px;width:220px;height:1px;background:#e2e2e2;"></div>
<div style="left:229px;top:480px;width:1000px;height:1px;background:#e2e2e2;"></div>
<div style="left:9px;top:508px;width:220px;height:1px;background:#e2e2e2;"></div>
<div style="left:229px;top:508px;width:1000px;height:1px;background:#e2e2e2;"></div>
<div style="left:9px;top:536px;width:220px;height:1px;background:#e2e2e2;"></div>
<div style="left:229px;top:536px;width:1000px;height:1px;background:#e2e2e2;"></div>
<div style="left:9px;top:564px;width:220px;height:1px;background:#e2e2e2;"></div>
<div style="left:229px;top:564px;width:1000px;height:1px;background:#e2e2e2;"></div>
<div style="left:9px;top:592px;width:220px;height:1px;background:#e2e2e2;"></div>
<div style="left:229px;top:592px;width:1000px;height:1px;background:#e2e2e2;"></div>
<div style="left:9px;top:620px;width:220px;height:1px;background:#e2e2e2;"></div>
<div style="left:229px;top:620px;width:1000px;height:1px;background:#e2e2e2;"></div>
<div style="left:9px;top:647px;width:220px;height:1px;background:#e2e2e2;"></div>
<div style="left:229px;top:647px;width:1000px;height:1px;background:#e2e2e2;"></div>
<div style="left:9px;top:675px;width:220px;height:1px;background:#e2e2e2;"></div>
<div style="left:229px;top:675px;width:1000px;height:1px;background:#e2e2e2;"></div>
<div style="left:9px;top:703px;width:220px;height:1px;background:#e2e2e2;"></div>
<div style="left:229px;top:703px;width:1000px;height:1px;background:#e2e2e2;"></div>
<div style="left:9px;top:731px;width:220px;height:1px;background:#e2e2e2;"></div>
<div style="left:229px;top:731px;width:1000px;height:1px;background:#e2e2e2;"></div>
<div style="left:9px;top:759px;width:220px;height:1px;background:#e2e2e2;"></div>
<div style="left:229px;top:759px;width:1000px;height:1px;background:#e2e2e2;"></div>
<div style="left:9px;top:787px;width:220px;height:1px;background:#e2e2e2;"></div>
<div style="left:229px;top:787px;width:1000px;height:1px;background:#e2e2e2;"></div>
<div style="left:9px;top:207px;width:1220px;height:1px;background:#dde1e8;"></div>
<div style="left:361px;top:207px;width:1px;height:584px;background:#e2e2e2;"></div>
<div style="left:492px;top:207px;width:1px;height:584px;background:#e2e2e2;"></div>
<div style="left:623px;top:207px;width:1px;height:584px;background:#e2e2e2;"></div>
<div style="left:754px;top:207px;width:1px;height:584px;background:#e2e2e2;"></div>
<div style="left:885px;top:207px;width:1px;height:584px;background:#e2e2e2;"></div>
<div style="left:1017px;top:207px;width:1px;height:584px;background:#e2e2e2;"></div>
<div style="left:1148px;top:207px;width:1px;height:584px;background:#e2e2e2;"></div>
<div style="left:300px;top:207px;width:1px;height:584px;background:#e2e2e2;"></div>
<div style="left:431px;top:207px;width:1px;height:584px;background:#e2e2e2;"></div>
<div style="left:562px;top:207px;width:1px;height:584px;background:#e2e2e2;"></div>
<div style="left:693px;top:207px;width:1px;height:584px;background:#e2e2e2;"></div>
<div style="left:825px;top:207px;width:1px;height:584px;background:#e2e2e2;"></div>
<div style="left:956px;top:207px;width:1px;height:584px;background:#e2e2e2;"></div>
<div style="left:1087px;top:207px;width:1px;height:584px;background:#e2e2e2;"></div>
<div style="left:1221px;top:164px;width:1px;height:627px;background:#e2e2e2;"></div>
<div style="left:229px;top:207px;width:1px;height:591px;background:#e2e2e2;"></div>
<div style="left:25px;top:234px;width:1px;height:135px;background:#e2e2e2;"></div>
<!-- scrollbars -->
<div style="left:1229px;top:207px;width:8px;height:591px;background:#eceef1"></div>
<div style="left:1229px;top:208px;width:8px;height:81px;border-radius:4px;background:#c3c7cf"></div>
<div style="left:229px;top:791px;width:1000px;height:7px;background:#eceef1"></div>
<div style="left:229px;top:791px;width:939px;height:7px;border-radius:4px;background:#c3c7cf"></div>
<div style="left:1229px;top:791px;width:8px;height:7px;background:#fff"></div>
<div style="left:9px;top:791px;width:220px;height:7px;background:#fff"></div>

<!-- right panel -->
<div style="left:1262px;top:0;width:1px;height:810px;background:#e5e7ec"></div>
<div style="left:1279px;top:15px;font-size:18px;font-weight:bold;color:#1a1a1a;line-height:24px;white-space:nowrap">グラフを編集</div>
<div style="left:1487px;top:15px;width:24px;height:24px;border-radius:12px;background:#e9ecf1"></div>
<svg style="position:absolute;left:1494px;top:22px" width="10" height="10" viewBox="0 0 10 10"><path d="M1 1 L9 9 M9 1 L1 9" stroke="#222" stroke-width="1.8"/></svg>
<div style="left:1263px;top:64px;width:132px;line-height:22px;text-align:center;font-size:14px;color:#2a6ee8">構成</div>
<div style="left:1395px;top:64px;width:132px;line-height:22px;text-align:center;font-size:14px;color:#333">設定</div>
<div style="left:1263px;top:90px;width:259px;height:1px;background:#e3e6eb"></div>
<div style="left:1263px;top:89px;width:132px;height:2px;background:#2a6ee8"></div>
<div class="lbl" style="left:1279px;top:118px;line-height:18px">行</div>
<div class="pill" style="left:1279px;top:147px;width:232px;background:#dfe6f8">月単位 販売日<svg class="chev" viewBox="0 0 7 10" width="7" height="10"><path d="M1.2 1.2 L5.2 5 L1.2 8.8" stroke="#1f2533" stroke-width="1.9" fill="none"/></svg></div>
<div class="pill" style="left:1279px;top:183px;width:232px;background:#dfe6f8">月の週 販売日<svg class="chev" viewBox="0 0 7 10" width="7" height="10"><path d="M1.2 1.2 L5.2 5 L1.2 8.8" stroke="#1f2533" stroke-width="1.9" fill="none"/></svg></div>
<div class="lbl" style="left:1279px;top:230px;line-height:18px">値</div>
<div class="pill" style="left:1279px;top:259px;width:232px;background:#def5ee">合計 販売価格<svg class="chev" viewBox="0 0 7 10" width="7" height="10"><path d="M1.2 1.2 L5.2 5 L1.2 8.8" stroke="#1f2533" stroke-width="1.9" fill="none"/></svg></div>
<div class="pill" style="left:1279px;top:295px;width:232px;background:#def5ee">合計 利益<svg class="chev" viewBox="0 0 7 10" width="7" height="10"><path d="M1.2 1.2 L5.2 5 L1.2 8.8" stroke="#1f2533" stroke-width="1.9" fill="none"/></svg></div>
<div class="lbl" style="left:1279px;top:341px;line-height:18px">列</div>
<div class="pill" style="left:1279px;top:371px;width:232px;background:#dfe6f8">曜日_数式<svg class="chev" viewBox="0 0 7 10" width="7" height="10"><path d="M1.2 1.2 L5.2 5 L1.2 8.8" stroke="#1f2533" stroke-width="1.9" fill="none"/></svg></div>
<div class="lbl" style="left:1279px;top:417px;line-height:18px">未使用項目</div>
<div style="left:1279px;top:443px;width:232px;height:30px;border:1px dashed #d6d9de;border-radius:15px;text-align:center;line-height:28px;font-size:12px;color:#777">列をドラッグ</div>
<div style="left:1442px;top:759px;width:80px;height:51px;background:linear-gradient(105deg,rgba(0,0,0,0) 55%,rgba(40,50,70,0.035) 100%)"></div>
<div style="left:1263px;top:758px;width:259px;height:1px;background:#e5e7ec"></div>
<div style="left:1276px;top:781px;font-size:14px;color:#2a6ee8;line-height:20px;white-space:nowrap">リセット</div>
<div style="left:1431px;top:775px;width:80px;height:32px;border-radius:16px;background:#f5f6f8;text-align:center;line-height:32px;font-size:14px;color:#9c9c9c">適用</div>
</div>
</body></html>
